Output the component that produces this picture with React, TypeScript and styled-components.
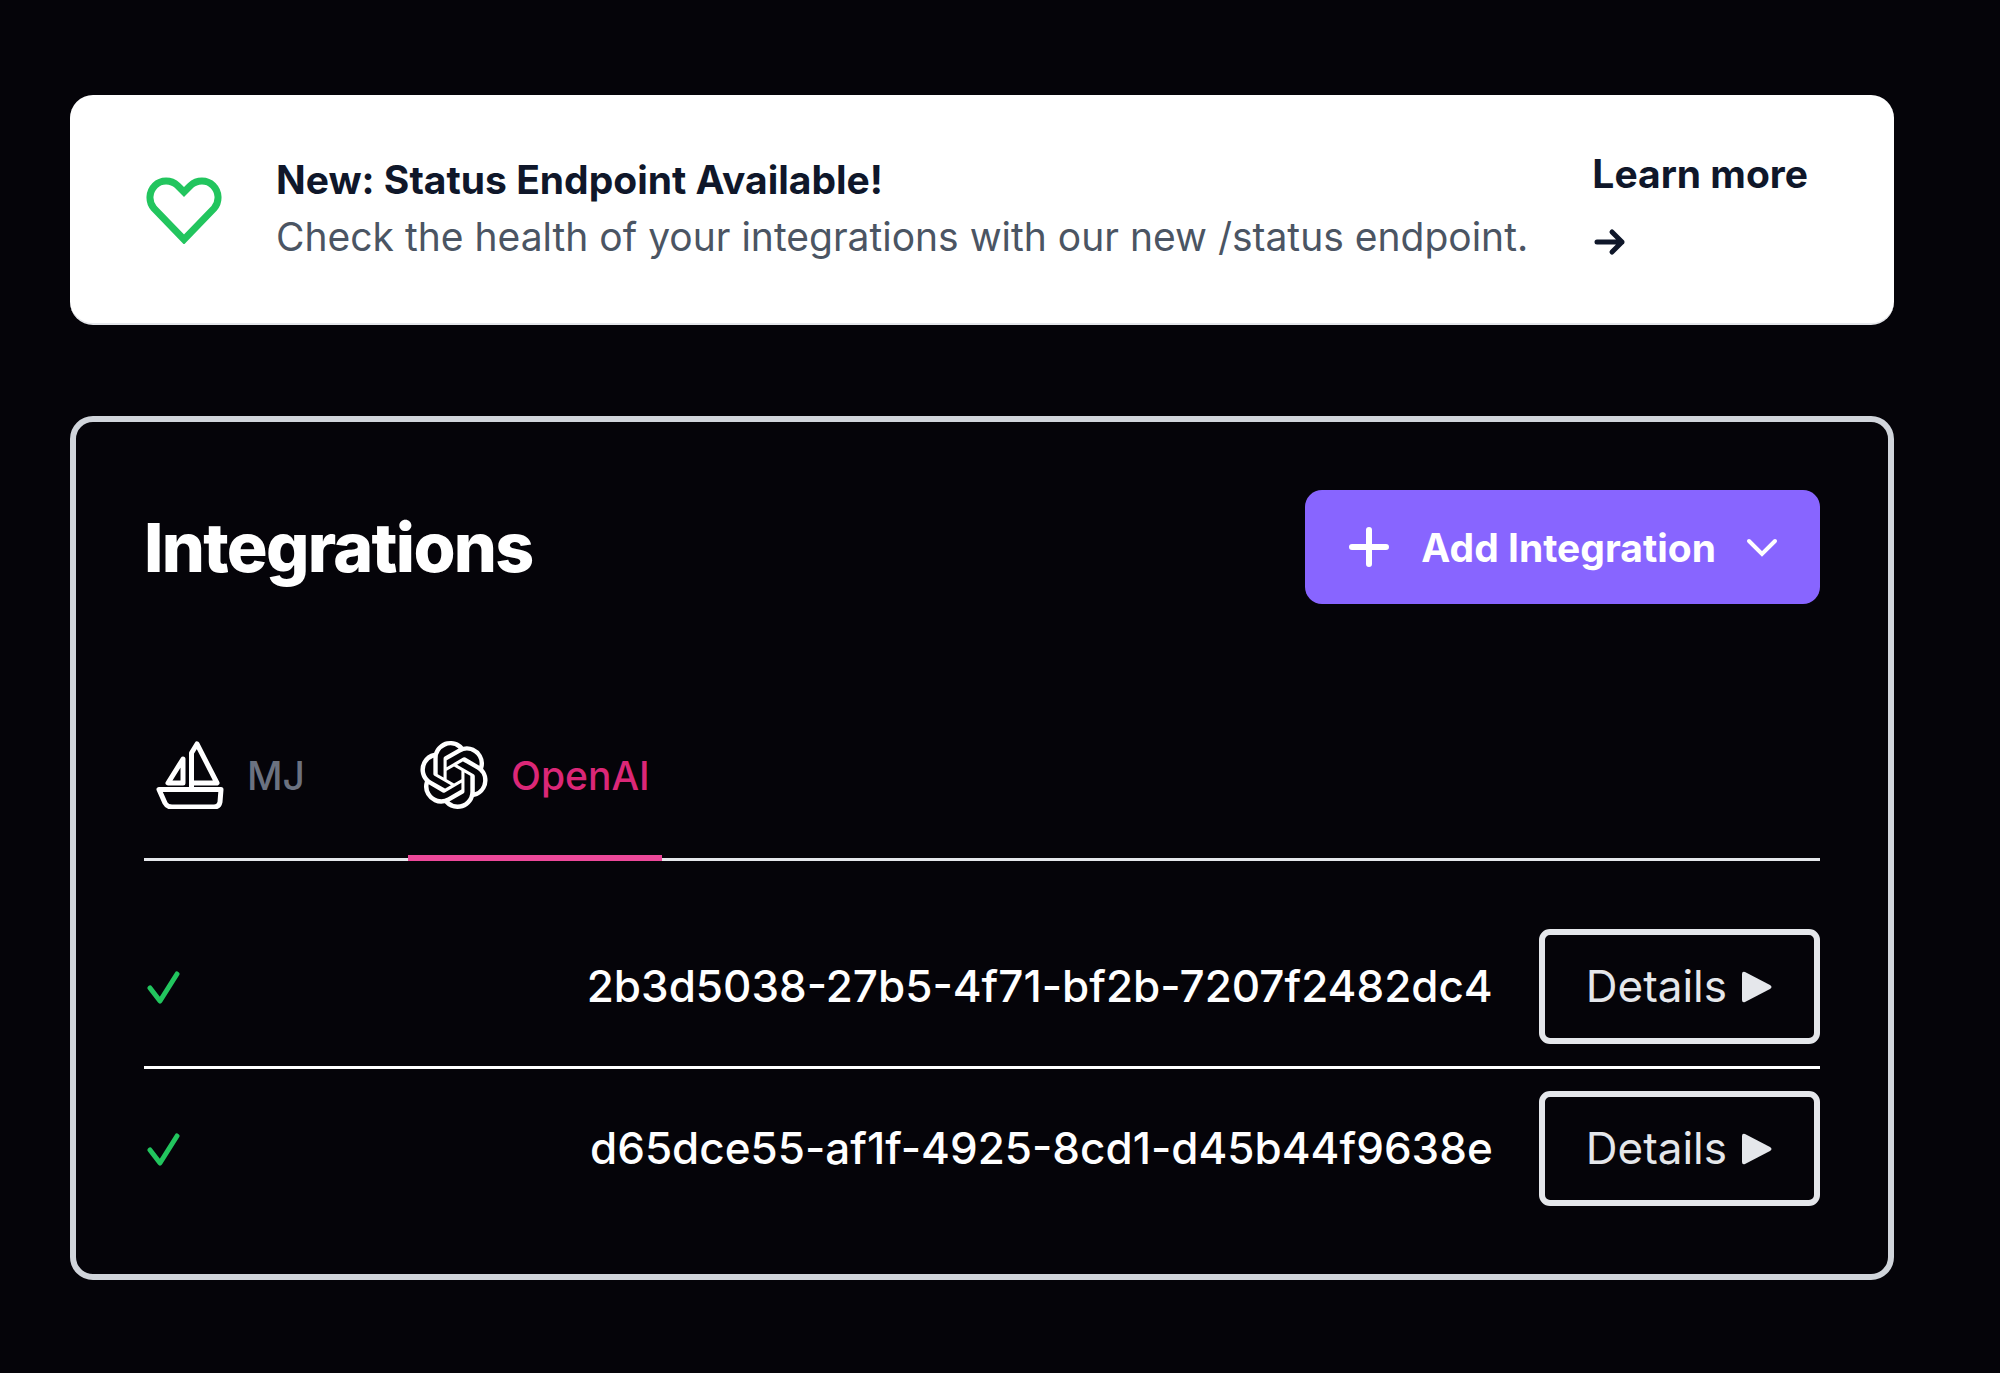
import React, { useState } from "react";
import styled, { createGlobalStyle } from "styled-components";
import { SiOpenai } from "react-icons/si";

const GlobalStyle = createGlobalStyle`
  *, *::before, *::after { box-sizing: border-box; }
  body {
    margin: 0;
    background: #050409;
    color: #ffffff;
    font-family: Inter, "Liberation Sans", sans-serif;
    font-size: 39px;
    line-height: 57px;
  }
  button { font: inherit; cursor: pointer; }
  h1, h2, p, ul { margin: 0; padding: 0; }
  svg { display: block; flex: none; }
`;

const Page = styled.main`
  display: flex;
  flex-direction: column;
  gap: 91px;
  padding: 95px 106px 93px 70px;
`;

const Notice = styled.section`
  display: flex;
  align-items: center;
  padding: 45px 86px 47px 75px;
  border-bottom: 2px solid #e5e7eb;
  border-radius: 23px;
  background: #ffffff;
`;

const NoticeBody = styled.div`
  flex: 1;
  padding: 0 46px 0 53px;
`;

const NoticeTitle = styled.h2`
  color: #0f172a;
  font-size: 39px;
  font-weight: 700;
  line-height: 57px;
`;

const NoticeText = styled.p`
  color: #4b5563;
`;

const NoticeLink = styled.a`
  display: flex;
  flex-direction: column;
  color: #0f172a;
  font-weight: 700;
  line-height: 68px;
  text-decoration: none;
`;

const ArrowLine = styled.span`
  display: flex;
  align-items: center;
  height: 68px;
`;

const Panel = styled.section`
  padding: 68px;
  border: 6px solid #d1d5db;
  border-radius: 23px;
`;

const PanelHeader = styled.header`
  display: flex;
  align-items: center;
  justify-content: space-between;
`;

const PanelTitle = styled.h1`
  font-size: 68px;
  font-weight: 800;
  line-height: 80px;
  letter-spacing: -0.025em;
`;

const AddButton = styled.button`
  display: flex;
  align-items: center;
  height: 114px;
  gap: 29px;
  padding: 0 41px;
  border: 0;
  border-radius: 17px;
  background: #8865ff;
  color: #ffffff;
  font-weight: 700;
`;

const Tabs = styled.div`
  display: flex;
  gap: 91px;
  margin-top: 91px;
  box-shadow: inset 0 -3px #e5e7eb;
`;

const Tab = styled.button<{ $active: boolean }>`
  display: flex;
  align-items: center;
  gap: 23px;
  padding: 46px 12px;
  border: 0;
  border-bottom: 6px solid ${(p) => (p.$active ? "#ec4899" : "transparent")};
  background: none;
  color: ${(p) => (p.$active ? "#db2777" : "#6b7280")};
  font-weight: 500;

  svg { color: #ffffff; }
`;

const List = styled.ul`
  margin-top: 46px;
  list-style: none;
`;

const Row = styled.li`
  display: flex;
  align-items: center;
  gap: 46px;
  padding: 22px 0;

  & + & { border-top: 3px solid #ffffff; }
  &:last-child { padding-bottom: 0; }
`;

const RowId = styled.span`
  flex: 1;
  font-size: 44px;
  font-weight: 500;
  text-align: right;
`;

const DetailsButton = styled.button`
  display: flex;
  align-items: center;
  gap: 14px;
  height: 115px;
  padding: 0 41px;
  border: 6px solid #e5e7eb;
  border-radius: 11px;
  background: none;
  color: #e5e7eb;
  font-size: 44px;
`;

const HeartIcon = () => (
  <svg width="78" height="72" viewBox="0 0 78 72" fill="none" stroke="#22c55e" strokeWidth="7">
    <path d="M39 20 L32.500 13.500 C26 7.500 16 7.500 10 13.500 C4 19.500 3 29.500 9 36.500 L39 67.500 L69 36.500 C75 29.500 74 19.500 68 13.500 C62 7.500 52 7.500 45.500 13.500 Z" />
  </svg>
);

const ArrowIcon = () => (
  <svg width="34" height="28" viewBox="0 0 34 28" fill="none" stroke="currentColor" strokeWidth="5" strokeLinecap="round" strokeLinejoin="round">
    <path d="M5 14 H30 M20 4 L30 14 L20 24" />
  </svg>
);

const PlusIcon = () => (
  <svg width="46" height="46" viewBox="0 0 46 46" fill="none" stroke="currentColor" strokeWidth="6" strokeLinecap="round">
    <path d="M23 6 V40 M6 23 H40" />
  </svg>
);

const ChevronIcon = () => (
  <svg width="34" height="22" viewBox="0 0 34 22" fill="none" stroke="currentColor" strokeWidth="4" strokeLinecap="round">
    <path d="M4 5 L17 18 L30 5" />
  </svg>
);

const BoatIcon = () => (
  <svg width="68" height="68" viewBox="0 0 68 68" fill="none" stroke="currentColor" strokeWidth="5" strokeLinejoin="round">
    <path d="M3 48.500 H65 L64 61 Q63 66 58 66 H16 Q11 66 9 62 Z" />
    <path d="M35.500 48 V12 L41 3 L61 42 H35.500" />
    <path d="M27 42 V18 L12 42 Z" />
  </svg>
);

const CheckIcon = () => (
  <svg width="36" height="36" viewBox="0 0 36 36" fill="none" stroke="#22c55e" strokeWidth="5" strokeLinecap="round" strokeLinejoin="round">
    <path d="M6 19 L16 32 L33 5" />
  </svg>
);

const PlayIcon = () => (
  <svg width="32" height="32" viewBox="0 0 32 32" fill="currentColor">
    <path d="M1 3 Q1 0 4 1 L29 14 Q32 16 29 18 L4 31 Q1 32 1 29 Z" />
  </svg>
);

const tabs = [
  { name: "MJ", icon: <BoatIcon /> },
  { name: "OpenAI", icon: <SiOpenai size={68} aria-hidden /> },
];

const integrations = [
  "2b3d5038-27b5-4f71-bf2b-7207f2482dc4",
  "d65dce55-af1f-4925-8cd1-d45b44f9638e",
];

export default function App() {
  const [active, setActive] = useState("OpenAI");

  return (
    <>
      <GlobalStyle />
      <Page>
        <Notice>
          <HeartIcon />
          <NoticeBody>
            <NoticeTitle>New: Status Endpoint Available!</NoticeTitle>
            <NoticeText>Check the health of your integrations with our new /status endpoint.</NoticeText>
          </NoticeBody>
          <NoticeLink href="#status">
            Learn more
            <ArrowLine>
              <ArrowIcon />
            </ArrowLine>
          </NoticeLink>
        </Notice>
        <Panel>
          <PanelHeader>
            <PanelTitle>Integrations</PanelTitle>
            <AddButton type="button">
              <PlusIcon />
              Add Integration
              <ChevronIcon />
            </AddButton>
          </PanelHeader>
          <Tabs role="tablist">
            {tabs.map((tab) => (
              <Tab
                key={tab.name}
                type="button"
                role="tab"
                aria-selected={active === tab.name}
                $active={active === tab.name}
                onClick={() => setActive(tab.name)}
              >
                {tab.icon}
                {tab.name}
              </Tab>
            ))}
          </Tabs>
          <List>
            {integrations.map((id) => (
              <Row key={id}>
                <CheckIcon />
                <RowId>{id}</RowId>
                <DetailsButton type="button">
                  Details
                  <PlayIcon />
                </DetailsButton>
              </Row>
            ))}
          </List>
        </Panel>
      </Page>
    </>
  );
}
